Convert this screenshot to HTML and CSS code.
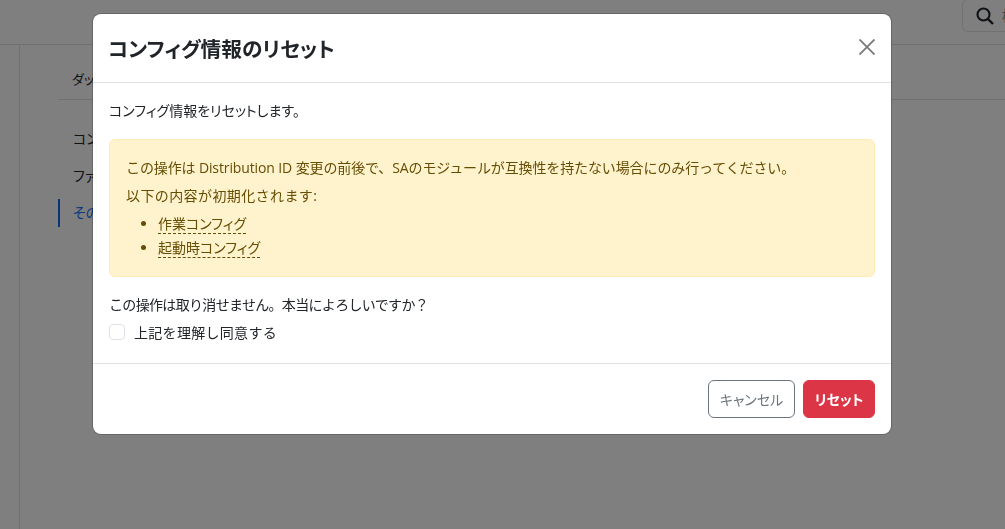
FILE: index.html
```html
<!doctype html>
<html lang="ja">

<head>
    <meta charset="UTF-8" />
    <meta name="viewport" content="width=device-width, initial-scale=1.0" />
    <title>コンフィグ情報のリセット</title>
    <link rel="stylesheet" href="styles.css">
</head>

<body>
    <header class="topbar">
        <div class="search-box">
            <svg class="search-icon" viewBox="0 0 18 18" width="18" height="18">
                <circle cx="7.5" cy="7.5" r="6" fill="none" stroke="#1f2328" stroke-width="2.1" />
                <path d="M11.8 11.8 L17 17" stroke="#1f2328" stroke-width="2.4" fill="none" />
            </svg>
            <span class="search-text">検索</span>
        </div>
    </header>

    <div class="page">
        <div class="rail"></div>
        <main class="content">
            <div class="tabs">ダッシュボード</div>
            <nav class="side-nav">
                <a class="side-link">コンフィグ</a>
                <a class="side-link">ファイル</a>
                <a class="side-link active">その他</a>
            </nav>
        </main>
    </div>

    <div class="backdrop">
        <div class="modal">
            <div class="modal-header">
                <h5 class="modal-title">コンフィグ情報のリセット</h5>
                <svg class="close-icon" viewBox="0 0 16 16" width="16" height="16">
                    <path d="M0.5 0.5 L15.5 15.5 M15.5 0.5 L0.5 15.5" stroke="#7b7b7b" stroke-width="1.9" fill="none" />
                </svg>
            </div>
            <div class="modal-body">
                <p class="lead-text">コンフィグ情報をリセットします。</p>
                <div class="alert">
                    <p class="alert-line">この操作は Distribution ID 変更の前後で、SAのモジュールが互換性を持たない場合にのみ行ってください。</p>
                    <p class="alert-line alert-line-short">以下の内容が初期化されます:</p>
                    <ul class="alert-list">
                        <li><span class="term">作業コンフィグ</span></li>
                        <li><span class="term">起動時コンフィグ</span></li>
                    </ul>
                </div>
                <p class="confirm-text">この操作は取り消せません。本当によろしいですか？</p>
                <label class="check-row">
                    <input class="check-box" type="checkbox">
                    <span>上記を理解し同意する</span>
                </label>
            </div>
            <div class="modal-footer">
                <button class="btn btn-cancel">キャンセル</button>
                <button class="btn btn-reset">リセット</button>
            </div>
        </div>
    </div>
</body>

</html>
```

FILE: styles.css
```css
* {
    box-sizing: border-box;
}

html,
body {
    height: 100%;
}

body {
    margin: 0;
    overflow: hidden;
    background: #fff;
    color: #212529;
    font-family: "Open Sans", "Noto Sans CJK JP", sans-serif;
    font-size: 14px;
    font-feature-settings: "palt";
}

.topbar {
    height: 45px;
    display: flex;
    justify-content: flex-end;
    border-bottom: 1px solid #dee2e6;
}

.search-box {
    width: 60px;
    height: 33px;
    flex: none;
    margin-right: -17px;
    margin-top: -1px;
    padding: 7px 0 0 13px;
    display: flex;
    gap: 8px;
    white-space: nowrap;
    border: 1px solid #dee2e6;
    border-radius: 6px;
}

.search-icon {
    flex: none;
}

.search-text {
    color: #6c8090;
    line-height: 18px;
}

.page {
    display: flex;
    height: 484px;
}

.rail {
    width: 20px;
    border-right: 1px solid #dee2e6;
}

.content {
    flex: 1;
    padding-left: 38px;
}

.tabs {
    height: 55px;
    padding: 24px 0 0 14px;
    font-size: 13px;
    border-bottom: 1px solid #dee2e6;
    margin-bottom: 25px;
}

.side-nav {
    display: flex;
    flex-direction: column;
    gap: 9px;
}

.side-link {
    height: 28px;
    line-height: 28px;
    padding-left: 15px;
}

.side-link.active {
    color: #0d6efd;
    border-left: 2px solid #0d6efd;
    padding-left: 13px;
}

.backdrop {
    position: fixed;
    inset: 0;
    background: rgba(0, 0, 0, 0.5);
    padding: 14px 0 0 93px;
}

.modal {
    width: 798px;
    height: 420px;
    display: flex;
    flex-direction: column;
    background: #fff;
    border-radius: 8px;
    box-shadow: 0 0 0 1px rgba(0, 0, 0, 0.2);
}

.modal-header {
    height: 69px;
    flex: none;
    display: flex;
    align-items: center;
    justify-content: space-between;
    padding: 4px 16px 0 15px;
    border-bottom: 1px solid #dee2e6;
}

.modal-title {
    margin: 0;
    font-size: 20.7px;
    font-weight: 700;
    line-height: 1.5;
}

.close-icon {
    margin-bottom: 6px;
}

.modal-body {
    flex: 1;
    padding: 15px 16px 0;
}

.lead-text {
    margin: 0 0 15px;
    line-height: 26px;
}

.alert {
    height: 138px;
    padding: 16px;
    color: #664d03;
    background: #fff3cd;
    border: 1px solid #ffecb5;
    border-radius: 6px;
    line-height: 24px;
}

.alert-line {
    margin: 0 0 4px;
    font-feature-settings: normal;
    letter-spacing: -0.12px;
}

.alert-line-short {
    letter-spacing: 0.4px;
}

.alert-list {
    margin: 0;
    padding-left: 32px;
}

.term {
    border-bottom: 1px dashed #664d03;
}

.confirm-text {
    margin: 16px 0 0;
    line-height: 24px;
    font-feature-settings: normal;
    letter-spacing: -0.67px;
}

.check-row {
    display: flex;
    align-items: center;
    gap: 9px;
    height: 28px;
    margin-top: 1px;
    font-feature-settings: normal;
    letter-spacing: 0.3px;
}

.check-box {
    appearance: none;
    width: 16px;
    height: 16px;
    margin: 0;
    background: #fff;
    border: 1px solid #dee2e6;
    border-radius: 4px;
}

.modal-footer {
    height: 71px;
    flex: none;
    display: flex;
    align-items: center;
    justify-content: flex-end;
    gap: 8px;
    padding: 0 16px 0;
    border-top: 1px solid #dee2e6;
}

.btn {
    height: 38px;
    padding: 0;
    font: inherit;
    white-space: nowrap;
    border-radius: 6px;
    border: 1px solid;
}

.btn-cancel {
    width: 87px;
    color: #6c757d;
    background: #fff;
    border-color: #6c757d;
}

.btn-reset {
    width: 72px;
    color: #fff;
    font-weight: 700;
    background: #dc3545;
    border-color: #dc3545;
}
```
